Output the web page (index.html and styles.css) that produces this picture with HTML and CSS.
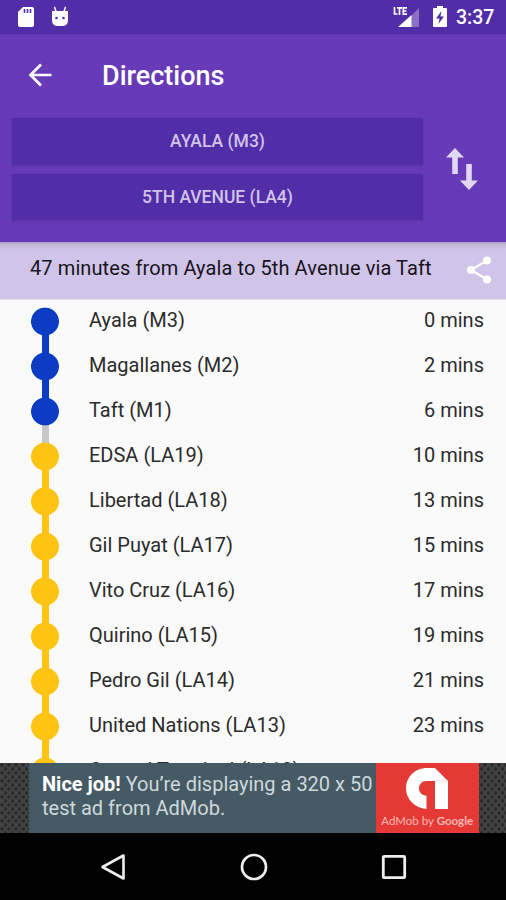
FILE: index.html
```html
<!DOCTYPE html>
<html lang="en">
<head>
<meta charset="utf-8">
<title>Directions</title>
<link rel="stylesheet" href="styles.css">
</head>
<body>
<div class="screen">
  <div class="status">
    <svg class="sd" width="18" height="22" viewBox="0 0 18 22"><path fill="#fff" d="M6 1h9q2 0 2 2v16q0 2-2 2H3q-2 0-2-2V6z"/><path stroke="#512da8" stroke-width="1.6" d="M7.5 3v4M10.5 3v4M13.5 3v4"/></svg>
    <svg class="droid" width="20" height="22" viewBox="0 0 20 22"><path fill="none" stroke="#fff" stroke-width="1.5" d="M4.5 1l1.7 5M15.5 1l-1.7 5"/><path fill="#fff" d="M2 5h16v9q0 6-6 6H8q-6 0-6-6z"/><circle cx="6.5" cy="12" r="1.3" fill="#512da8"/><circle cx="13.5" cy="12" r="1.3" fill="#512da8"/></svg>
    <span class="spacer"></span>
    <svg class="signal" width="28" height="24" viewBox="0 0 28 24"><path fill="#8a71c6" d="M26 3v19H7z"/><path fill="#fff" d="M18.500 10v12H5z"/><path fill="none" stroke="#fff" stroke-width="1.7" d="M1.500 2v7h3M4 2.800h5M6.500 2.800V10M14 2.800h-3.700v6.400H14M10.500 6H13.500"/></svg>
    <svg class="battery" width="16" height="24" viewBox="0 0 16 24"><path fill="#fff" d="M5 1h6v2h3q1 0 1 1v17q0 1-1 1H2q-1 0-1-1V4q0-1 1-1h3z"/><path fill="#512da8" d="M9.500 6L4 13.500h3.500L6.500 19 12 11.500H8.500z"/></svg>
    <span class="clock">3:37</span>
  </div>
  <header class="top">
    <div class="bar">
      <svg class="back" width="26" height="26" viewBox="0 0 26 26"><path fill="none" stroke="#fff" stroke-width="2.700" d="M24.500 13H4M14 2.500L3.500 13 14 23.500"/></svg>
      <h1>Directions</h1>
    </div>
    <div class="route">
      <div class="fields">
        <div class="field f1"><span>AYALA (M3)</span></div>
        <div class="field f2"><span>5TH AVENUE (LA4)</span></div>
      </div>
      <svg class="swap" width="34" height="44" viewBox="0 0 34 44"><path fill="#e1d8f3" d="M10 1l9 9.500h-6.200V27H7.200V10.500H1zM24 43l9-9.500h-6.200V17h-5.600v16.500H15z"/></svg>
    </div>
  </header>
  <div class="summary">
    <span>47 minutes from Ayala to 5th Avenue via Taft</span>
    <svg class="share" width="26" height="28" viewBox="0 0 26 28"><path fill="none" stroke="#fff" stroke-width="2.400" d="M21 4.500L5 14l16 9.500"/><g fill="#fff"><circle cx="21" cy="4.500" r="4"/><circle cx="5" cy="14" r="4"/><circle cx="21" cy="23.500" r="4"/></g></svg>
  </div>
  <div class="list">
    <div class="row blue first"><i></i><span>Ayala (M3)</span><b>0 mins</b></div>
    <div class="row blue"><i></i><span>Magallanes (M2)</span><b>2 mins</b></div>
    <div class="row blue walk"><i></i><span>Taft (M1)</span><b>6 mins</b></div>
    <div class="row change"><i></i><span>EDSA (LA19)</span><b>10 mins</b></div>
    <div class="row"><i></i><span>Libertad (LA18)</span><b>13 mins</b></div>
    <div class="row"><i></i><span>Gil Puyat (LA17)</span><b>15 mins</b></div>
    <div class="row"><i></i><span>Vito Cruz (LA16)</span><b>17 mins</b></div>
    <div class="row"><i></i><span>Quirino (LA15)</span><b>19 mins</b></div>
    <div class="row"><i></i><span>Pedro Gil (LA14)</span><b>21 mins</b></div>
    <div class="row"><i></i><span>United Nations (LA13)</span><b>23 mins</b></div>
    <div class="row"><i></i><span>Central Terminal (LA12)</span><b></b></div>
  </div>
  <div class="ad">
    <div class="adtext"><strong>Nice job!</strong> You’re displaying a 320 x 50<br>test ad from AdMob.</div>
    <div class="adlogo">
      <svg width="44" height="43" viewBox="0 0 44 43"><path fill="#fff" d="M21.500 42C10 41 1 32.500 1 21.500 1 9.500 10.500 1 22 1h8l13 13v28H30V14h-8.500c-4.500 0-7.500 3.300-7.500 7.300 0 4.200 3 7.200 7.500 7.400z"/><path stroke="#e4dada" stroke-width=".8" d="M30 14h13"/></svg>
      <div class="by">AdMob by <em>Google</em></div>
    </div>
  </div>
  <nav class="nav">
    <svg width="28" height="30" viewBox="0 0 28 30"><path fill="none" stroke="#eee" stroke-width="2.600" stroke-linejoin="round" d="M24.500 3.500v23L3.500 15z"/></svg>
    <svg width="28" height="28" viewBox="0 0 28 28"><circle cx="14" cy="14" r="12" fill="none" stroke="#eee" stroke-width="2.700"/></svg>
    <svg width="26" height="26" viewBox="0 0 26 26"><rect x="2.300" y="2.300" width="21.400" height="21.400" rx="1" fill="none" stroke="#eee" stroke-width="2.800"/></svg>
  </nav>
</div>
</body>
</html>
```
FILE: styles.css
```css
* { box-sizing: border-box; }
body { margin: 0; font-family: Roboto, "Liberation Sans", sans-serif; }
svg { display: block; flex: none; }
.screen { width: 506px; height: 900px; overflow: hidden; display: flex; flex-direction: column; background: #fafafa; }
.screen > * { flex: none; }
.status { height: 34px; background: #512da8; display: flex; align-items: center; padding: 0 11px 0 17px; }
.droid { margin-left: 15px; }
.spacer { flex: 1; }
.battery { margin-left: 11px; }
.clock { color: #fff; font-size: 19.5px; font-weight: 500; line-height: 34px; width: 39px; margin-left: 8px; padding-top: 2px; white-space: nowrap; }
.top { height: 208px; background: #673ab7; }
.bar { height: 84px; display: flex; align-items: center; padding: 0 0 3px 27px; }
h1 { margin: 2px 0 0 49px; color: #fff; font-size: 27px; font-weight: 500; line-height: 32px; }
.route { display: flex; padding-left: 12px; }
.fields { width: 411px; display: flex; flex-direction: column; gap: 9px; }
.field { height: 46.500px; background: #512da8; color: #d1c4e9; font-size: 17.500px; font-weight: 500; display: flex; align-items: center; justify-content: center; box-shadow: 0 1px 2px rgba(50, 20, 110, .25); }
.swap { margin: 29px 0 0 22px; }
.summary { height: 58px; display: flex; background: linear-gradient(#aaa0bc, #c7bbdc 3px, #d1c4e9 8px); border-bottom: 1px solid #e4def0; color: #17141b; font-size: 20px; line-height: 24px; padding: 14px 0 0 30px; letter-spacing: .1px; }
.summary span { width: 436px; white-space: nowrap; }
.share { margin-top: 0; }
.list { height: 463px; overflow: hidden; color: #2b2b2b; font-size: 20px; }
.row { height: 45px; display: flex; align-items: center; padding: 0 22px 3px 31px; margin-bottom: 0; position: relative; }
.row i { width: 28px; height: 45px; margin: 1px 30px -2px 0; background: radial-gradient(circle at 14px 22.500px, #ffc412 13.500px, transparent 14.300px), linear-gradient(#ffc412, #ffc412) 50% 0 / 7px 100% no-repeat; }
.row.blue i { background: radial-gradient(circle at 14px 22.500px, #0d3cc4 13.500px, transparent 14.300px), linear-gradient(#0d3cc4, #0d3cc4) 50% 0 / 7px 100% no-repeat; }
.row.first i { background: radial-gradient(circle at 14px 22.500px, #0d3cc4 13.500px, transparent 14.300px), linear-gradient(transparent 50%, #0d3cc4 50%) 50% 0 / 7px 100% no-repeat; }
.row.walk i { background: radial-gradient(circle at 14px 22.500px, #0d3cc4 13.500px, transparent 14.300px), linear-gradient(#0d3cc4 50%, #c8c8c8 50%) 50% 0 / 7px 100% no-repeat; }
.row.change i { background: radial-gradient(circle at 14px 22.500px, #ffc412 13.500px, transparent 14.300px), linear-gradient(#c8c8c8 50%, #ffc412 50%) 50% 0 / 7px 100% no-repeat; }
.row span { flex: 1; }
.row b { font-weight: 400; }
.list .first { margin-top: -1px; }
.ad { height: 70px; display: flex; padding: 0 27.500px 0 29px; background: radial-gradient(circle at 2px 2px, #292929 1.400px, transparent 2px) 0 0 / 7px 8px, radial-gradient(circle at 5.500px 6px, #292929 1.400px, transparent 2px) 0 0 / 7px 8px, #424242; }
.adtext { width: 347px; background: #455a64; color: #cfd8dc; font-size: 20px; line-height: 23.500px; padding: 10px 0 0 13px; white-space: nowrap; }
.adtext strong { color: #fff; }
.adlogo { flex: 1; background: #e53935; display: flex; flex-direction: column; align-items: center; padding-top: 4px; }
.by { color: #ffb7b3; font-family: Lato, sans-serif; font-size: 11.500px; line-height: 14px; margin-top: 4px; white-space: nowrap; }
.by em { font-style: normal; font-weight: 700; }
.nav { height: 67px; background: #000; display: flex; align-items: center; padding-left: 99px; }
.nav svg:nth-child(2) { margin-left: 113px; }
.nav svg:nth-child(3) { margin-left: 113px; }
```
